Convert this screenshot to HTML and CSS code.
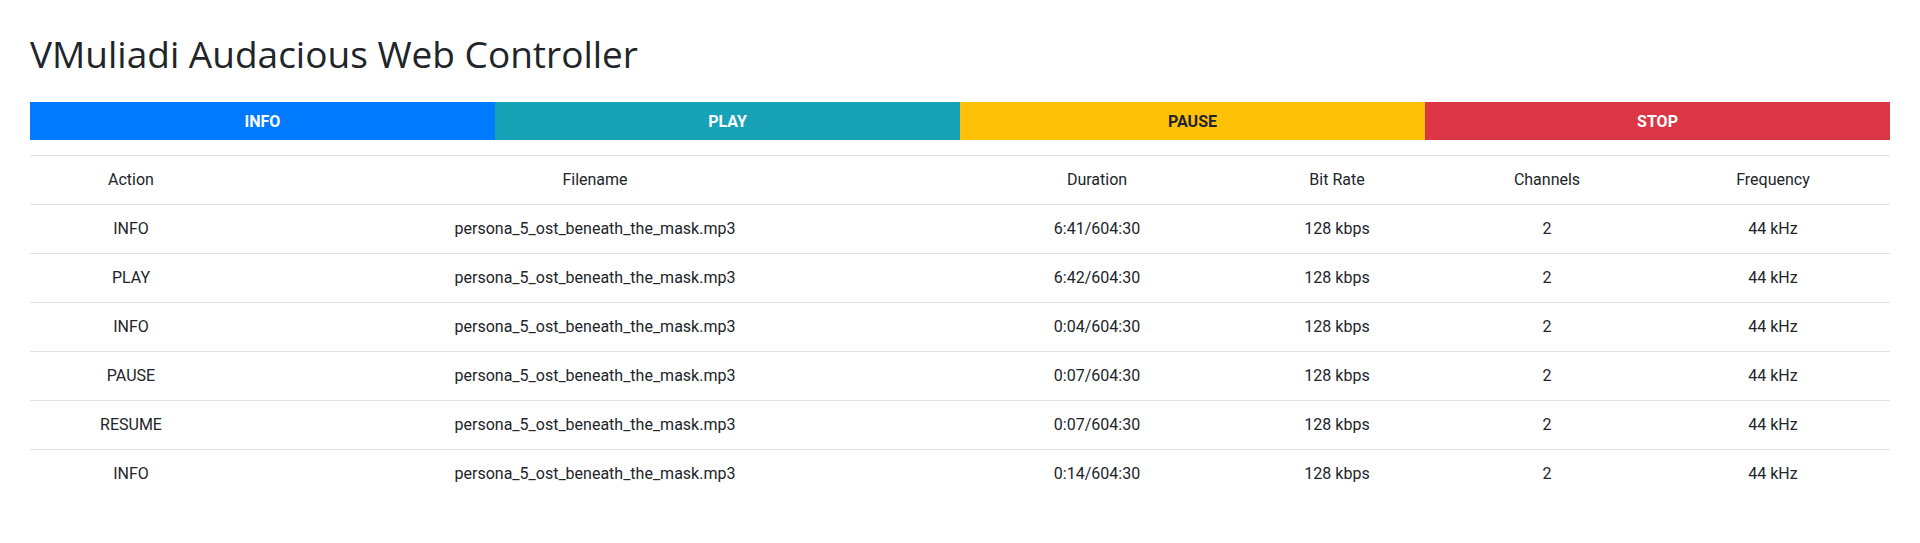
FILE: index.html
```html
<!DOCTYPE html>
<html lang="en">
<head>
<meta charset="utf-8">
<title>VMuliadi Audacious Web Controller</title>
<link rel="stylesheet" href="styles.css">
</head>
<body>
<div class="page">
  <h1 class="title">VMuliadi Audacious Web Controller</h1>
  <div class="controls">
    <button class="btn btn-info">INFO</button>
    <button class="btn btn-play">PLAY</button>
    <button class="btn btn-pause">PAUSE</button>
    <button class="btn btn-stop">STOP</button>
  </div>
  <table class="log">
    <colgroup>
      <col class="c-action">
      <col class="c-file">
      <col class="c-dur">
      <col class="c-bit">
      <col class="c-chan">
      <col class="c-freq">
    </colgroup>
    <thead>
      <tr><th>Action</th><th>Filename</th><th>Duration</th><th>Bit Rate</th><th>Channels</th><th>Frequency</th></tr>
    </thead>
    <tbody>
      <tr><td>INFO</td><td>persona_5_ost_beneath_the_mask.mp3</td><td>6:41/604:30</td><td>128 kbps</td><td>2</td><td>44 kHz</td></tr>
      <tr><td>PLAY</td><td>persona_5_ost_beneath_the_mask.mp3</td><td>6:42/604:30</td><td>128 kbps</td><td>2</td><td>44 kHz</td></tr>
      <tr><td>INFO</td><td>persona_5_ost_beneath_the_mask.mp3</td><td>0:04/604:30</td><td>128 kbps</td><td>2</td><td>44 kHz</td></tr>
      <tr><td>PAUSE</td><td>persona_5_ost_beneath_the_mask.mp3</td><td>0:07/604:30</td><td>128 kbps</td><td>2</td><td>44 kHz</td></tr>
      <tr><td>RESUME</td><td>persona_5_ost_beneath_the_mask.mp3</td><td>0:07/604:30</td><td>128 kbps</td><td>2</td><td>44 kHz</td></tr>
      <tr><td>INFO</td><td>persona_5_ost_beneath_the_mask.mp3</td><td>0:14/604:30</td><td>128 kbps</td><td>2</td><td>44 kHz</td></tr>
    </tbody>
  </table>
</div>
</body>
</html>
```

FILE: styles.css
```css
html, body {
  margin: 0;
  padding: 0;
  background: #ffffff;
}

body {
  font-family: Roboto, "Liberation Sans", Arial, sans-serif;
  font-size: 16px;
  line-height: 1.5;
  color: #212529;
}

.page {
  padding: 30px 30px 0 30px;
}

.title {
  margin: 0 0 24px 0;
  font-family: "Open Sans", "Liberation Sans", sans-serif;
  font-weight: 400;
  font-size: 37px;
  line-height: 48px;
  color: #212529;
}

.controls {
  display: grid;
  grid-template-columns: repeat(4, 1fr);
  height: 38px;
}

.btn {
  border: 0;
  margin: 0;
  padding: 0;
  font-family: Roboto, "Liberation Sans", sans-serif;
  font-size: 16px;
  font-weight: 700;
  color: #ffffff;
  cursor: pointer;
}

.btn-info { background: #007bff; }
.btn-play { background: #17a2b8; }
.btn-pause { background: #ffc107; color: #212529; }
.btn-stop { background: #dc3545; }

.log {
  width: 100%;
  margin-top: 15px;
  border-collapse: collapse;
  table-layout: fixed;
}

.c-action { width: 202px; }
.c-file { width: 726px; }
.c-dur { width: 278px; }
.c-bit { width: 202px; }
.c-chan { width: 218px; }
.c-freq { width: 234px; }

.log th,
.log td {
  padding: 12px;
  border-top: 1px solid #dee2e6;
  text-align: center;
  font-weight: 400;
  line-height: 24px;
}
```
